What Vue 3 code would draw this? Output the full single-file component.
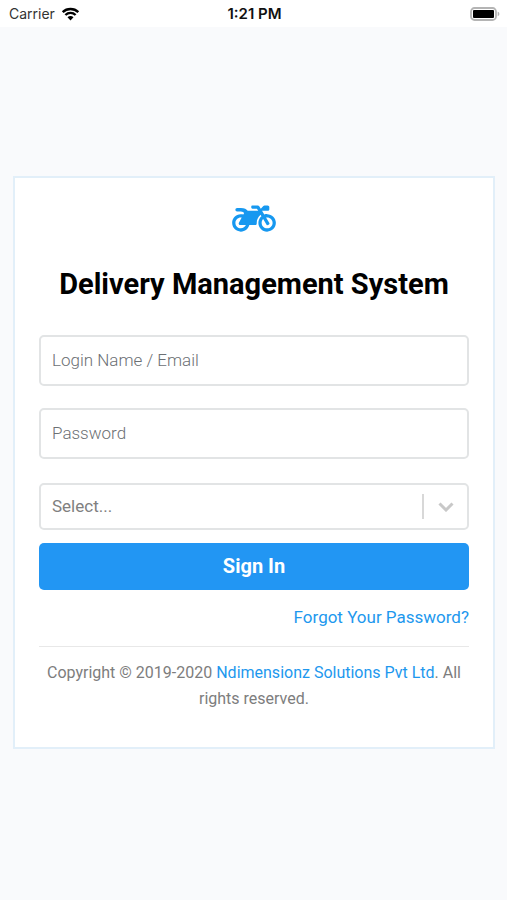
<script setup>
import { ref } from 'vue'

const login = ref('')
const password = ref('')
const choice = ref('')
</script>

<template>
  <div class="screen">
    <header class="status">
      <div class="carrier">
        <span>Carrier</span>
        <svg class="wifi" viewBox="0 0 18 14" aria-hidden="true">
          <path d="M1.2 5.1C5.5.9 12.5.9 16.8 5.1" />
          <path d="M3.9 8C6.8 5.2 11.2 5.2 14.1 8" />
          <path class="dot" d="M6 10.2C7.7 8.7 10.3 8.7 12 10.2L9 13.4Z" />
        </svg>
      </div>
      <span class="time">1:21 PM</span>
      <svg class="battery" viewBox="0 0 30 14" aria-hidden="true">
        <rect class="shell" x="1" y="1" width="25" height="12" rx="3.5" />
        <rect x="3" y="3" width="21" height="8" rx="1" />
        <path class="tip" d="M27.7 4.8C29.9 5.4 29.9 8.6 27.7 9.2Z" />
      </svg>
    </header>

    <main class="content">
      <form class="card" @submit.prevent>
        <svg class="logo" viewBox="0 0 640 512" aria-hidden="true">
          <path d="M512.9 192c-14.9-.1-29.1 2.3-42.4 6.9L437.6 144H520c13.3 0 24-10.7 24-24V88c0-13.3-10.7-24-24-24h-45.3c-6.8 0-13.3 2.9-17.8 7.9l-37.5 41.7-22.8-38C392.2 68.4 384.4 64 376 64h-80c-8.8 0-16 7.2-16 16v16c0 8.8 7.2 16 16 16h66.4l19.2 32H227.9c-17.7-23.1-44.9-40-99.9-40H72.5C59 104 47.7 115 48 128.5c.2 13 10.9 23.5 24 23.5h56c24.5 0 38.7 10.9 47.8 24.8l-11.3 20.5c-13-3.9-26.9-5.7-41.3-5.2C55.9 194.5 1.6 249.6 0 317c-1.6 72.1 56.3 131 128 131 59.6 0 109.7-40.8 124-96h84.2c13.7 0 24.6-11.4 24-25.1-2.1-47.1 17.5-93.7 56.2-125l12.5 20.8c-27.6 23.7-45.1 58.9-44.8 98.2.5 69.6 57.2 126.5 126.8 127.1 71.6.7 129.8-57.5 129.2-129.1-.7-69.6-57.6-126.4-127.2-126.9zM128 400c-44.1 0-80-35.9-80-80s35.9-80 80-80c4.2 0 8.4.3 12.5 1L99 316.4c-8.8 16 2.8 35.6 21 35.6h81.3c-12.4 28.2-40.6 48-73.3 48zm463.9-75.6c-2.2 40.6-35 73.4-75.5 75.5-46.1 2.5-84.4-34.3-84.4-79.9 0-21.4 8.4-40.8 22.1-55.1l49.4 82.4c4.5 7.6 14.4 10 22 5.5l13.7-8.2c7.6-4.5 10-14.4 5.5-22l-48.6-80.9c5.2-1.1 10.5-1.6 15.9-1.6 45.6-.1 82.3 38.2 79.9 84.3z" />
        </svg>
        <h1 class="title">Delivery Management System</h1>

        <input v-model="login" class="field" type="text" placeholder="Login Name / Email" aria-label="Login Name / Email" />
        <input v-model="password" class="field" type="password" placeholder="Password" aria-label="Password" />
        <div class="picker">
          <select v-model="choice" class="select" aria-label="Select...">
            <option value="">Select...</option>
          </select>
          <div class="indicator">
            <svg class="chevron" viewBox="0 0 16 10" aria-hidden="true">
              <path d="M1.5 1.5L8 8L14.5 1.5" />
            </svg>
          </div>
        </div>
        <button class="submit" type="submit">Sign In</button>
        <a class="forgot" href="#">Forgot Your Password?</a>

        <footer class="legal">
          Copyright © 2019-2020 <a href="#">Ndimensionz Solutions Pvt Ltd</a>. All rights reserved.
        </footer>
      </form>
    </main>
  </div>
</template>

<style>
body {
  background: #f9fafc;
}
</style>

<style scoped>
.screen {
  display: flex;
  flex-direction: column;
  min-height: 100vh;
  background: #f9fafc;
  color: #7d7d7d;
  font-family: Roboto, "Liberation Sans", sans-serif;
}

.status {
  display: grid;
  grid-template-columns: 1fr auto 1fr;
  align-items: center;
  height: 27px;
  padding: 0 7px 0 9px;
  background: #fff;
  color: #111;
  font-family: Inter, sans-serif;
  font-size: 14px;
}

.carrier {
  display: flex;
  align-items: center;
  gap: 6px;
  color: #333;
}

.wifi {
  width: 19px;
  height: 14px;
  fill: none;
  stroke: #000;
  stroke-width: 2.4;
}

.wifi .dot {
  fill: #000;
  stroke: none;
}

.time {
  font-size: 15px;
  font-weight: 600;
}

.battery {
  justify-self: end;
  width: 30px;
  height: 14px;
}

.shell {
  fill: #fff;
  stroke: #b4b4b4;
  stroke-width: 1.8;
}

.tip {
  fill: #b4b4b4;
}

.content {
  display: flex;
  flex: 1;
  flex-direction: column;
  justify-content: center;
  padding: 0 12px 2px 13px;
}

.card {
  display: flex;
  flex-direction: column;
  padding: 23px 24px 35px;
  border: 2px solid #e2eff9;
  background: #fff;
}

.logo {
  align-self: center;
  width: 44px;
  height: 35px;
  fill: #1698f0;
}

.title {
  margin: 28px 0 31px;
  color: #000;
  font-size: 29px;
  font-weight: 700;
  line-height: 40px;
  text-align: center;
}

.field,
.select {
  box-sizing: border-box;
  width: 100%;
  border: 2px solid #e2e4e5;
  border-radius: 5px;
  background: #fff;
  color: #808080;
  font-family: inherit;
  font-size: 17px;
}

.field {
  height: 51px;
  margin: 0 0 22px;
  padding: 0 11px 2px;
  font-weight: 300;
}

.field::placeholder {
  color: #6c7074;
  opacity: 1;
}

.picker {
  position: relative;
  margin-top: 2px;
}

.select {
  display: block;
  height: 47px;
  padding: 0 56px 1px 11px;
  appearance: none;
}

.indicator {
  position: absolute;
  top: 11px;
  right: 0;
  bottom: 11px;
  box-sizing: border-box;
  display: flex;
  align-items: center;
  justify-content: center;
  width: 47px;
  padding-right: 2px;
  border-left: 2px solid #d8d8d8;
  pointer-events: none;
}

.chevron {
  width: 16px;
  height: 10px;
  fill: none;
  stroke: #c8c8c8;
  stroke-width: 3;
}

.submit {
  height: 47px;
  margin: 13px 0 0;
  padding: 0 0 2px;
  border: 0;
  border-radius: 5px;
  background: #2296f3;
  color: #fff;
  font-family: inherit;
  font-size: 20px;
  font-weight: 700;
}

a {
  color: #1d98ee;
  text-decoration: none;
}

.forgot {
  align-self: flex-end;
  margin: 14px 0 16px;
  font-size: 17px;
  line-height: 26px;
}

.legal {
  padding-top: 13px;
  border-top: 1px solid #e8e8e8;
  font-size: 16px;
  line-height: 26px;
  text-align: center;
}
</style>
